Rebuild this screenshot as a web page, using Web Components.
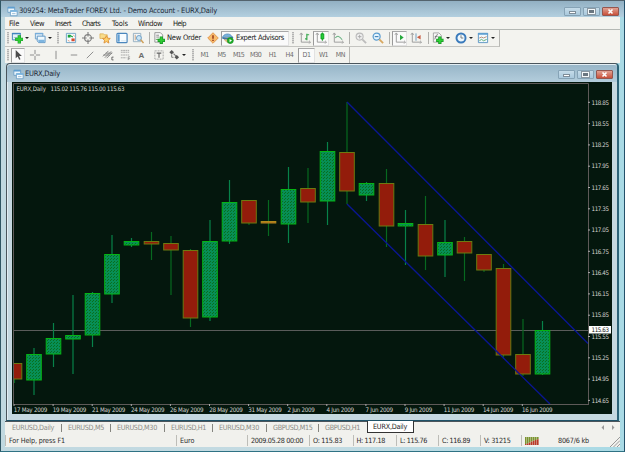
<!DOCTYPE html>
<html lang="en">
<head>
<meta charset="utf-8">
<title>MetaTrader</title>
<style>
  html, body { margin: 0; height: 100%; overflow: hidden; }
  body { font-family: "DejaVu Sans Condensed", "DejaVu Sans", sans-serif; font-size: 7.5px; color: #1c1c1c; }
</style>
</head>
<body>
<terminal-window></terminal-window>

<script>
// Small base class: every element renders its template into an open shadow root
class BaseElement extends HTMLElement {
  constructor() {
    super();
    this.attachShadow({ mode: "open" });
  }

  connectedCallback() {
    const template = document.createElement("template");
    template.innerHTML = `<style>${this.getStyles()}</style>${this.getTemplate()}`;
    this.shadowRoot.appendChild(template.content.cloneNode(true));
    this.ready();
  }

  getStyles() { return ""; }
  getTemplate() { return "<slot></slot>"; }
  ready() {}
}

// Text that is tracked in or out until it fills the width given in "w"
class FitText extends BaseElement {
  getStyles() {
    return `
      :host { display: block; flex: none; white-space: pre; line-height: 1; }
      span { display: inline-block; }
    `;
  }
  getTemplate() {
    return `<span>${this.getAttribute("text")}</span>`;
  }
  ready() {
    const w = Number(this.getAttribute("w"));
    const span = this.shadowRoot.querySelector("span");
    const natural = span.getBoundingClientRect().width;
    if (w && natural) {
      span.style.letterSpacing = (w - natural) / span.textContent.length + "px";
      this.style.width = w + "px";
    }
  }
}
customElements.define("fit-text", FitText);

// All icons are drawn on a 13x13 grid
const AXES = `<path d="M2.500 1.500v9.500H12M1 3l1.500-2L4 3M11 9.500l1.500 1.500L11 12.500" fill="none" stroke="#999"/>`;
const ICONS = {
  windows: `<path d="M1 1.5h8v6H1z" fill="#e9f5fc" stroke="#6a9cc4"/><path d="M1 1h8v2H1z" fill="#5f9fd0"/><path d="M4 5.5h8v6H4z" fill="#f6fbff" stroke="#6a9cc4"/><path d="M4 5h8v2H4z" fill="#7db7e0"/><path d="M6 9h4" stroke="#8fb6d0"/>`,
  newchart: `<path d="M1.500 1.500h8.500v7h-8.500z" fill="#e4f2fa" stroke="#3f80b4"/><path d="M1 1h9.500v1.500H1z" fill="#3f86bf"/><path d="M3 6h4" stroke="#9fc0d6"/><path d="M9 3.500v9M4.500 8h9" stroke="#1a9c2a" stroke-width="3.600"/><path d="M9 4.200v7.600M5.200 8h7.600" stroke="#2fd035" stroke-width="2.200"/>`,
  profiles: `<path d="M1.500 1.500h8v6h-8z" fill="#e4f1fa" stroke="#6c9fc8"/><path d="M1 1h9v1.500H1z" fill="#78aedb"/><path d="M3.500 4.500h8.500v7H5l-1.500-2z" fill="#eff8fd" stroke="#5a93c2"/><path d="M4.500 8.500h7V11H5z" fill="#7db5e0"/>`,
  market: `<path d="M1.500 1.500h10v10h-10z" fill="#f5fbff" stroke="#6fa3c4"/><path d="M3 6V3h3v3z" fill="#1aa33a"/><path d="M5 3.500l3.500 2" stroke="#1aa33a" stroke-width="1.200"/><path d="M7 7h3.500v3H7z" fill="#d94a2c"/><path d="M9 3l1.500 2M3 9l2 1" stroke="#e0a080"/>`,
  cross: `<circle cx="6.500" cy="6.500" r="3.700" fill="none" stroke="#858585" stroke-width="1.300"/><path d="M6.500 0v5M6.500 8v5M0 6.500h5M8 6.500h5" stroke="#7c7c7c" stroke-width="1.200"/>`,
  favorites: `<path d="M1 2h4l1 1h3v4H1z" fill="#f8dc8a" stroke="#d8a848" stroke-width=".7"/><path d="M8 4l1.300 2.700 2.900.3-2.200 2 .7 3L8 10.400 5.400 12l.6-3-2.200-2 2.900-.3z" fill="#ffd06a" stroke="#dd9138"/>`,
  terminal: `<rect x="1" y="1.500" width="11" height="10" rx="1" fill="#f8fcff" stroke="#4a86bd" stroke-width="1.300"/><path d="M2 2.500h2v8H2z" fill="#5f9fd4"/><path d="M5.500 9.500h5.500" stroke="#d6e8f4"/>`,
  tester: `<path d="M1.500 1.500h8v9h-8z" fill="#f2f6f9" stroke="#94aec0"/><path d="M3.500 3v6" stroke="#c8a078"/><circle cx="7.500" cy="6.500" r="2.700" fill="#cbe6f6" stroke="#6a9cc4"/><path d="M9.500 8.500l3 3.500" stroke="#cfa05a" stroke-width="1.700"/>`,
  order: `<path d="M2 .7h6l2.500 2.500V11H2z" fill="#fafafa" stroke="#888" stroke-width=".9"/><path d="M3.500 3.500h3M3.500 5.500h3" stroke="#888"/><path d="M3 8h3" stroke="#60a058"/><path d="M9 5v8M5 9h8" stroke="#169424" stroke-width="3.500"/><path d="M9 5.700v6.600M5.700 9h6.600" stroke="#2fcc35" stroke-width="2"/>`,
  alert: `<path d="M6.500.8l5.700 5.700-5.700 5.700L.8 6.500z" fill="#f8bc6c" stroke="#e0964c"/><path d="M6.500 3.500v3.800M6.500 8.300v1.500" stroke="#8f2b12" stroke-width="1.500"/>`,
  expert: `<path d="M.5 6C1 2 9 0 11 5.500z" fill="#79b3dc" stroke="#4d88b8" stroke-width=".8"/><path d="M2 6.500h8L9 10l-3 1.500L3 9z" fill="#f1ce8a" stroke="#b98e48" stroke-width=".6"/><path d="M.5 6.500Q6 8.500 12 5.500" stroke="#3f77a8" stroke-width="1.500" fill="none"/><circle cx="9" cy="9.300" r="3.300" fill="#1fae2b" stroke="#0a8516" stroke-width=".6"/><path d="M8.200 7.600l2.600 1.700L8.200 11z" fill="#fff"/>`,
  bars: `${AXES}<path d="M8.500 2v7M6.500 7.500h2M8.500 3h2.500" stroke="#3aa850" stroke-width="1.300"/>`,
  candles: `${AXES}<path d="M8 .5v9" stroke="#0a8f1c"/><path d="M6.500 2h3v5.500h-3z" fill="#25cc38" stroke="#0a9f1c"/>`,
  line: `${AXES}<path d="M3.500 6.500Q7 2 11 8.500" fill="none" stroke="#6cb384" stroke-width="1.100"/>`,
  zoomin: `<circle cx="5" cy="5" r="3.800" fill="#efefef" stroke="#bbb" stroke-width="1.200"/><path d="M3 5h4M5 3v4" stroke="#aaa"/><path d="M8 8l4 4" stroke="#bcbcbc" stroke-width="2"/>`,
  zoomout: `<circle cx="5" cy="5" r="3.800" fill="#e4f4fd" stroke="#5a9ccf" stroke-width="1.300"/><path d="M3 5h4" stroke="#3f80b8" stroke-width="1.200"/><path d="M8 8l4 4" stroke="#d8a860" stroke-width="2"/>`,
  scroll: `${AXES}<path d="M6.500 3l4 3-4 3z" fill="#27a83d"/>`,
  shift: `${AXES}<path d="M6.500 1.500v8" stroke="#6a9abc"/><path d="M11.500 3.200v5L7.500 5.700z" fill="#c86048"/>`,
  indicators: `<path d="M1.500 1h6L10 3.500V11H1.500z" fill="#f8f8f8" stroke="#999" stroke-width=".9"/><path d="M3 8q1.500-6 3.500-5M3 5h3" fill="none" stroke="#777"/><path d="M8.500 5v8M4.500 9h8" stroke="#169424" stroke-width="3.500"/><path d="M8.500 5.700v6.600M5.200 9h6.600" stroke="#2fd035" stroke-width="2"/>`,
  clock: `<circle cx="6.500" cy="6.500" r="4.900" fill="#eef7fd" stroke="#3a7abb" stroke-width="2.100"/><path d="M6.500 3.500v3h2.500" fill="none" stroke="#777"/>`,
  template: `<path d="M1.500 1.500h10v10h-10z" fill="#f1f9fe" stroke="#5a93c2"/><path d="M1 1h11v2H1z" fill="#5f9fd0"/><path d="M2.500 6.500l2.500-1 2 1 3.500-1.500" fill="none" stroke="#b68b70"/><path d="M2.500 9.500l2.500-1.500 2 1.500 3.500-1.500" fill="none" stroke="#5aaa70"/>`,
  pointer: `<path d="M4 1v9l2.200-2 1.500 3.700 1.500-.7L7.700 7.500h3z" fill="#4c4c4c"/>`,
  plus: `<path d="M6.500 1v4.500M6.500 7.500V12M1 6.500h4.500M7.500 6.500H12" stroke="#888"/>`,
  vline: `<path d="M6.500 2v9" stroke="#888"/>`,
  hline: `<path d="M3 6.500h7" stroke="#888"/>`,
  trend: `<path d="M3 10l7-7" stroke="#888"/>`,
  channel: `<path d="M1 8l6-6M3 9.500L10 2.500M5 10l6-6M1.500 6.500h7M4 4.500h7" stroke="#777" stroke-width=".9"/><path d="M12.500 8.800h-1.800v3h1.800" fill="none" stroke="#555" stroke-width=".9"/>`,
  fibo: `<path d="M2 1.500h9M2 3.500h9M2 6.500h9M2 9.500h6" stroke="#a5a5a5" stroke-dasharray="2 .5"/><path d="M10 12V8.500h2M10 10.500h2" fill="none" stroke="#888" stroke-width=".8"/>`,
  textbox: `<path d="M2 2h9v9H2z" fill="none" stroke="#999" stroke-dasharray="1 .7"/><path d="M4 4.500h5M6.500 4.500v5" stroke="#666" stroke-width="1.200"/>`,
  arrows: `<path d="M4 1l2.500 2.500L4 6 1.500 3.500z" fill="#555"/><path d="M6 5l4 4" stroke="#777" stroke-width="1.200"/><path d="M9.500 6.500L12 9l-2.500 2.500L7 9z" fill="#555"/><path d="M4 6v3h2" stroke="#777"/>`
};

// One toolbar cell: an icon and/or a label, with optional drop-down caret
class ToolButton extends BaseElement {
  getStyles() {
    return `
      :host { display: flex; flex: none; align-items: center; justify-content: center; box-sizing: border-box; height: 15px; width: ${this.getAttribute("w")}px; }
      :host([drop]), :host([start]) { justify-content: flex-start; }
      :host([pressed]) { background: #fafafa; border: 1px solid; border-color: #a8a8a8 #e2e2e2 #e2e2e2 #9a9a9a; }
      svg { flex: none; width: 12px; height: 12px; display: block; }
      i { flex: none; margin-left: 2px; border: 2px solid transparent; border-top: 2.500px solid #222; border-bottom: 0; }
    `;
  }
  getTemplate() {
    const icon = this.getAttribute("icon");
    return (icon ? `<svg viewBox="0 0 13 13" fill="none">${ICONS[icon]}</svg>` : "")
      + (this.hasAttribute("drop") ? "<i></i>" : "") + "<slot></slot>";
  }
}
customElements.define("tool-button", ToolButton);

// Vertical divider, or the dotted handle at the start of a toolbar
class ToolDivider extends BaseElement {
  getStyles() {
    return `
      :host { display: flex; flex: none; align-items: center; justify-content: center; width: ${this.getAttribute("w")}px; }
      b { width: 1px; height: 12px; background: #b0b0ac; }
      :host([grip]) b { width: 2px; background: repeating-linear-gradient(#b4b4b4 0 1px, #d8d8d4 1px 2px); }
    `;
  }
  getTemplate() { return "<b></b>"; }
}
customElements.define("tool-divider", ToolDivider);

// Row of toolbar cells
class ToolBar extends BaseElement {
  getStyles() {
    return `
      :host { display: flex; width: max-content; box-sizing: border-box; align-items: center; border-right: 1px solid #b8b8b4; border-bottom: 1px solid #c4c4c0; }
    `;
  }
}
customElements.define("tool-bar", ToolBar);

// Title bar with icon, caption and the three window buttons
class TitleBar extends BaseElement {
  getStyles() {
    return `
      :host { display: flex; align-items: center; box-sizing: border-box; color: #1d2a38; }
      svg { width: 11px; height: 11px; flex: none; margin-right: 1px; }
      nav { display: flex; gap: 2px; margin-left: auto; }
      nav span { box-sizing: border-box; width: 17px; height: 9px; border: 1px solid #86a3b6; border-radius: 1px; background: linear-gradient(#c6dce9, #a9c8dc); display: flex; align-items: center; justify-content: center; }
      .min::after { content: ""; width: 7px; height: 3px; margin-top: 2px; background: #fff; border: 1px solid #7d8c98; box-sizing: border-box; }
      .max::after { content: ""; width: 7px; height: 5px; border: 1.500px solid #f4f8fa; outline: .5px solid #8b98a2; background: #6a7680; box-sizing: border-box; }
      .close { border-color: #94564f !important; background: linear-gradient(#e0a294, #c9503a) !important; }
      .close svg { width: 7px; height: 7px; margin: 0; }
    `;
  }
  getTemplate() {
    return `
      <svg viewBox="0 0 13 13" fill="none">${ICONS.windows}</svg>
      <slot></slot>
      <nav>
        <span class="min"></span><span class="max"></span>
        <span class="close"><svg viewBox="0 0 7 7"><path d="M1.500 1.500l4 4M5.500 1.500l-4 4" stroke="#fff" stroke-width="1.600"/></svg></span>
      </nav>
    `;
  }
}
customElements.define("title-bar", TitleBar);

// Candles: [center x, high, body top, body bottom, low, direction]
const CANDLES = [
  [14.5, 363, 363, 379, 383, "d"], [34, 348, 354, 380, 395, "u"], [53.5, 323, 338, 354, 367, "u"],
  [73, 295, 335, 339, 374, "u"], [92.5, 292, 293, 335, 347, "u"], [112, 235, 254, 294, 303, "u"],
  [131.5, 238, 241, 245, 247, "u"], [151.5, 232, 241, 244, 260, "d"], [171, 236, 243, 250, 295, "d"],
  [190.5, 249, 250, 318, 327, "d"], [210, 220, 241, 317, 321, "u"], [229.5, 180, 202, 241, 244, "u"],
  [249, 200, 200, 223, 225, "d"], [268.5, 200, 221, 223, 236, "o"], [288.5, 167, 189, 224, 243, "u"],
  [308, 168, 188, 202, 223, "d"], [327.5, 142, 151, 201, 225, "u"], [347, 102, 152, 191, 204, "d"],
  [366.5, 182, 183, 195, 201, "u"], [386.5, 169, 183, 226, 247, "d"], [405.5, 210, 223, 226, 265, "u"],
  [425.5, 196, 224, 256, 270, "d"], [445, 220, 242, 255, 277, "u"], [464.5, 237, 241, 253, 281, "d"],
  [484, 254, 254, 270, 272, "d"], [503.5, 264, 268, 355, 359, "d"], [523, 319, 354, 374, 376, "d"],
  [542.5, 321, 330, 374, 375, "u"]
];
const DATES = ["17 May 2009", "19 May 2009", "21 May 2009", "24 May 2009", "26 May 2009", "28 May 2009", "31 May 2009",
  "2 Jun 2009", "4 Jun 2009", "7 Jun 2009", "9 Jun 2009", "11 Jun 2009", "14 Jun 2009", "16 Jun 2009"];

// Price chart, drawn in window coordinates through the viewBox
class CandleChart extends BaseElement {
  getStyles() {
    return `
      :host { display: block; background: #04170d; }
      svg { display: block; width: 100%; height: 100%; }
      text { font-size: 6.200px; fill: #d4d4d0; }
    `;
  }
  getTemplate() {
    const candles = CANDLES.map(([x, high, top, bottom, low, kind]) => {
      const color = { u: "#05b414", d: "#6c7a10", o: "#b08a1c" }[kind];
      const fill = { u: "url(#hatch)", d: "#931c0b", o: "#b5641c" }[kind];
      const wick = kind === "u" ? "#078249" : "#07691f";
      return `<path d="M${x} ${high}V${low}" stroke="${wick}" stroke-width="1.200"/>
        <rect x="${x - 7.3}" y="${top + .5}" width="14.600" height="${bottom - top - .5}" fill="${fill}" stroke="${color}"/>`;
    }).join("");

    let prices = "";
    for (let i = 0; i < 15; i++) {
      const y = 102.3 + i * 21.29;
      prices += `<path d="M588 ${y.toFixed(1)}h2" stroke="#aaa"/>
        <text x="591.500" y="${(y + 2.2).toFixed(1)}" textLength="17.500">${(118.85 - i * .3).toFixed(2)}</text>`;
    }

    const dates = DATES.map((date, i) => {
      const x = 14 + i * 39.1;
      const w = date.length === 11 ? (date.includes("Jun") ? 30.5 : 33.5) : 27.5;
      return `<path d="M${x.toFixed(1)} 404v2" stroke="#aaa"/>
        <text x="${(x - .3).toFixed(1)}" y="411.600" textLength="${w}">${date}</text>`;
    }).join("");

    return `
      <svg viewBox="12 82 600 332">
        <defs>
          <pattern id="hatch" width="3" height="3" patternUnits="userSpaceOnUse">
            <rect width="3" height="3" fill="#078e56"/>
            <rect width="1" height="1" fill="#08701f"/><rect x="2" y="1" width="1" height="1" fill="#08701f"/>
          </pattern>
          <clipPath id="plot"><rect x="14" y="84" width="574" height="320"/></clipPath>
        </defs>
        <path d="M13.500 404V83.500H588.500V404.500M13.500 404.500H589" fill="none" stroke="#5e5a58"/>
        <g clip-path="url(#plot)">
          <path d="M14 330.500H588" stroke="#5a5c5a"/>
          ${candles}
          <path d="M347 102L588 343.500M347 204L550 404" stroke="#0a1690" stroke-width="1.400"/>
        </g>
        ${prices}
        <rect x="589" y="326" width="22" height="7.500" fill="#fff"/>
        <text x="591.500" y="332.200" textLength="17.500" style="fill:#111">115.63</text>
        ${dates}
        <text x="16.500" y="91" textLength="29.500">EURX,Daily</text>
        <text x="50.500" y="91" textLength="74">115.02 115.76 115.00 115.63</text>
      </svg>
    `;
  }
}
customElements.define("candle-chart", CandleChart);

// Chart window inside the workspace
class ChartWindow extends BaseElement {
  getStyles() {
    return `
      :host { display: flex; flex-direction: column; box-sizing: border-box; background: #c5d8e0; border: 1px solid #4a555c; border-bottom-color: #1f5268; border-right: 2px solid #2d6479; border-radius: 4px 4px 0 0; padding: 0 4px 5px 5px; box-shadow: inset 1px 1px #e2edf3; }
      title-bar { height: 17px; margin: 1px -4px 0 -5px; padding: 1px 4px 0 6px; border-radius: 3px 3px 0 0; background: linear-gradient(#98b6c8, #b3cddc); }
      candle-chart { flex: none; width: 600px; height: 332px; }
    `;
  }
  getTemplate() {
    return `
      <title-bar><fit-text text="EURX,Daily" w="35"></fit-text></title-bar>
      <candle-chart></candle-chart>
    `;
  }
}
customElements.define("chart-window", ChartWindow);

// Bottom tabs, one per open chart
class ChartTabs extends BaseElement {
  getStyles() {
    return `
      :host { display: flex; box-sizing: border-box; background: #f1f1ed; border-top: 1px solid #4b555b; padding-left: 1px; color: #8c8c86; font-size: 7.200px; }
      div { flex: none; box-sizing: border-box; height: 11px; display: flex; align-items: center; padding-left: 6px; }
      div:not(.active)::after { content: ""; width: 1px; height: 8px; margin-left: auto; background: #85857f; }
      div.last::after { visibility: hidden; }
      .active { margin-top: -1px; height: 12px; background: #fff; border: 1px solid #333; border-top: 0; color: #222; padding: 1px 0 0 5px; }
      svg { width: 20px; height: 11px; margin-left: auto; margin-right: 1px; }
    `;
  }
  getTemplate() {
    // [label, text width, tab width]
    const tabs = [["EURUSD,Daily", 42, 56], ["EURUSD,M5", 36, 49], ["EURUSD,M30", 40, 54], ["EURUSD,H1", 35, 48],
      ["EURUSD,M30", 40, 54], ["GBPUSD,M15", 39.5, 52], ["GBPUSD,H1", 35, 48], ["EURX,Daily", 34, 47]];
    return tabs.map(([label, w, total], i) => `
      <div class="${i === 7 ? "active" : i === 6 ? "last" : ""}" style="width:${total}px">
        <fit-text text="${label}" w="${w}"></fit-text>
      </div>`).join("")
      + `<svg viewBox="0 0 20 11"><path d="M5 3v5L2.500 5.500zM13 3v5l2.500-2.500z" fill="#999"/></svg>`;
  }
}
customElements.define("chart-tabs", ChartTabs);

// Status bar cells
class StatusBar extends BaseElement {
  getStyles() {
    return `
      :host { display: flex; box-sizing: border-box; background: #f1f1ed; font-size: 7.200px; color: #2a2a2a; align-items: center; }
      div { flex: none; box-sizing: border-box; height: 11px; display: flex; align-items: center; border-left: 1px solid #bdbdb8; padding-left: 3px; }
      div:first-child { border: 0; padding-left: 1px; }
      svg { display: block; }
      .size { margin-left: auto; align-self: flex-end; }
    `;
  }
  getTemplate() {
    // [label, text width, cell width]
    const cells = [["For Help, press F1", 56, 171], ["Euro", 14.5, 71], ["2009.05.28 00:00", 52, 62], ["O: 115.83", 29, 43.5],
      ["H: 117.18", 28.5, 43.5], ["L: 115.76", 27, 42], ["C: 116.89", 28, 42], ["V: 31215", 26.5, 41]];
    // Connection meter: red part grows to the right
    let bars = "";
    for (let i = 0; i < 7; i++) {
      const y = 7 - i * .8;
      bars += `<path d="M${i * 2 + .8} 0v${y}" stroke="#7b9430" stroke-width="1.600"/>
        <path d="M${i * 2 + .8} ${y}V8" stroke="#b83a28" stroke-width="1.600"/>`;
    }
    return cells.map(([label, w, total]) => `
      <div style="width:${total}px"><fit-text text="${label}" w="${w}"></fit-text></div>`).join("")
      + `<div style="gap:18px"><svg width="15" height="8">${bars}</svg><fit-text text="8067/6 kb" w="31"></fit-text></div>
      <svg class="size" width="10" height="10"><path d="M0 10L10 0M3.500 10L10 3.500M7 10l3-3" stroke="#999"/></svg>`;
  }
}
customElements.define("status-bar", StatusBar);

// Menu row
class MenuBar extends BaseElement {
  getStyles() {
    return `
      :host { display: flex; box-sizing: border-box; align-items: center; background: #f3f3ef; border-bottom: 1px solid #b4b8b4; padding: 1px 0 0 4px; }
      span { display: block; flex: none; }
    `;
  }
  getTemplate() {
    // [label, text width, distance to the next item]
    const items = [["File", 10, 21], ["View", 14, 25], ["Insert", 16, 27], ["Charts", 18, 30], ["Tools", 16, 26], ["Window", 24, 35], ["Help", 13, 20]];
    return items.map(([label, w, step]) => `<span style="width:${step}px"><fit-text text="${label}" w="${w}"></fit-text></span>`).join("");
  }
}
customElements.define("menu-bar", MenuBar);

// Main application window
class TerminalWindow extends BaseElement {
  getStyles() {
    return `
      :host { display: flex; flex-direction: column; box-sizing: border-box; width: 625px; height: 452px; border: 1px solid; border-color: #53636d #24506a #2f7284 #2f5563; background: linear-gradient(90deg, #c0d8e0, #c4dbe2 50%, #a9dae5); padding: 0 4px 4px; }
      title-bar.main { flex: none; height: 16px; margin: 0 -4px; padding: 4px 5px 0 6px; background: linear-gradient(#92b0c3, #b3cfdf); }
      menu-bar { flex: none; height: 13px; }
      .tools { flex: none; height: 33px; background: #f3f3ef; display: flex; flex-direction: column; }
      .tools tool-bar { height: 17px; }
      .tools tool-bar.second { height: 16px; border-bottom: 0; color: #6c6c6c; font-size: 7px; }
      chart-window { flex: none; height: 358px; margin-left: 1px; width: 613px; }
      chart-tabs { flex: none; height: 12px; }
      status-bar { flex: none; height: 14px; padding-top: 1px; }
      .letter { font: bold 8px "Liberation Sans", sans-serif; color: #6c6c6c; }
    `;
  }
  getTemplate() {
    const periods = [["M1", 8], ["M5", 8], ["M15", 11], ["M30", 11], ["H1", 7.5], ["H4", 8], ["D1", 8], ["W1", 9], ["MN", 9.5]]
      .map(([name, w]) => `<tool-button w="17"${name === "D1" ? " pressed" : ""}><fit-text text="${name}" w="${w}"></fit-text></tool-button>`).join("");
    return `
      <title-bar class="main"><fit-text text="309254: MetaTrader FOREX Ltd. - Demo Account - EURX,Daily" w="198"></fit-text></title-bar>
      <menu-bar></menu-bar>
      <div class="tools">
        <tool-bar>
          <tool-divider grip w="6"></tool-divider>
          <tool-button icon="newchart" w="23" drop></tool-button>
          <tool-button icon="profiles" w="20" drop></tool-button>
          <tool-divider grip w="8"></tool-divider>
          <tool-button icon="market" w="17"></tool-button>
          <tool-button icon="cross" w="17"></tool-button>
          <tool-button icon="favorites" w="17"></tool-button>
          <tool-button icon="terminal" w="17"></tool-button>
          <tool-button icon="tester" w="16"></tool-button>
          <tool-divider w="7"></tool-divider>
          <tool-button icon="order" w="51" start><fit-text text="New Order" w="34" style="margin-left:2px"></fit-text></tool-button>
          <tool-button icon="alert" w="17"></tool-button>
          <tool-button icon="expert" w="68" start pressed><fit-text text="Expert Advisors" w="48" style="margin-left:2px"></fit-text></tool-button>
          <tool-divider grip w="8"></tool-divider>
          <tool-button icon="bars" w="16"></tool-button>
          <tool-button icon="candles" w="16" pressed></tool-button>
          <tool-button icon="line" w="18"></tool-button>
          <tool-divider w="5"></tool-divider>
          <tool-button icon="zoomin" w="17"></tool-button>
          <tool-button icon="zoomout" w="17"></tool-button>
          <tool-divider w="6"></tool-divider>
          <tool-button icon="scroll" w="15" pressed></tool-button>
          <tool-button icon="shift" w="18"></tool-button>
          <tool-divider w="6"></tool-divider>
          <tool-button icon="indicators" w="23" drop style="margin-left:1px"></tool-button>
          <tool-button icon="clock" w="22" drop></tool-button>
          <tool-button icon="template" w="22" drop></tool-button>
        </tool-bar>
        <tool-bar class="second">
          <tool-divider grip w="6"></tool-divider>
          <tool-button icon="pointer" w="14" pressed></tool-button>
          <tool-button icon="plus" w="20"></tool-button>
          <tool-button icon="vline" w="21"></tool-button>
          <tool-button icon="hline" w="15"></tool-button>
          <tool-button icon="trend" w="18"></tool-button>
          <tool-button icon="channel" w="17"></tool-button>
          <tool-button icon="fibo" w="17"></tool-button>
          <tool-button w="17"><span class="letter">A</span></tool-button>
          <tool-button icon="textbox" w="18"></tool-button>
          <tool-button icon="arrows" w="21" drop></tool-button>
          <tool-divider grip w="7"></tool-divider>
          ${periods}
        </tool-bar>
      </div>
      <chart-window></chart-window>
      <chart-tabs></chart-tabs>
      <status-bar></status-bar>
    `;
  }
}
customElements.define("terminal-window", TerminalWindow);
</script>
</body>
</html>
